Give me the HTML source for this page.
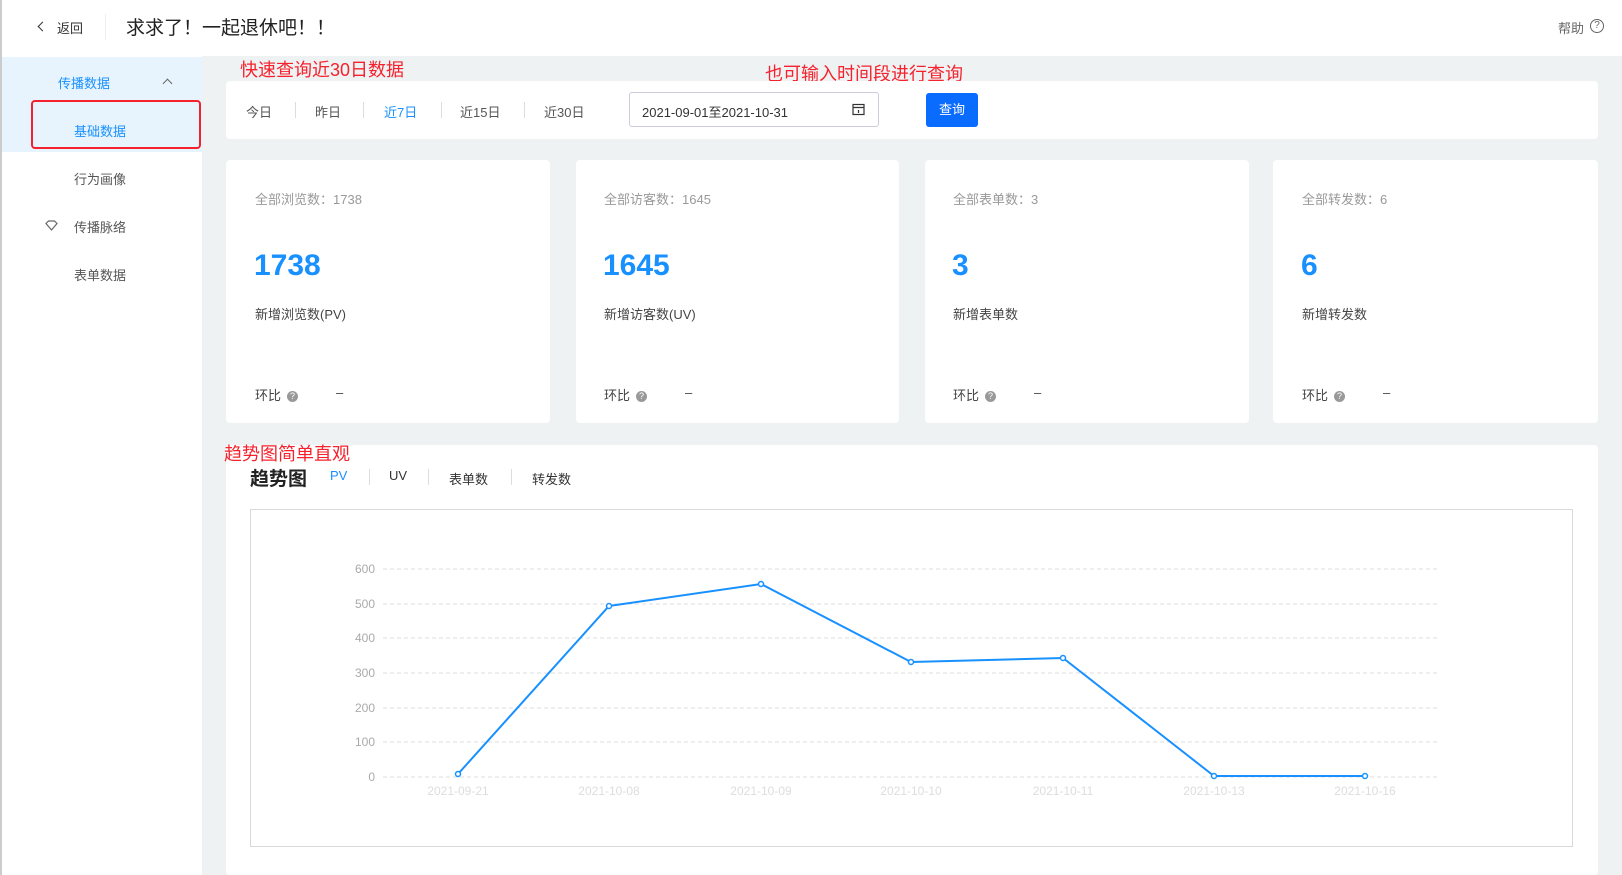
<!DOCTYPE html>
<html><head><meta charset="utf-8"><style>
*{margin:0;padding:0;box-sizing:border-box}
body{width:1622px;height:875px;overflow:hidden;background:#eef2f3;font-family:"Liberation Sans","Noto Sans CJK SC",sans-serif;position:relative;color:#333}
.a{position:absolute;white-space:nowrap}
.hdr{left:0;top:0;width:1622px;height:56px;background:#fff;border-left:2px solid #ccc}
.side{left:0;top:56px;width:202px;height:819px;background:#fff;border-left:2px solid #ccc}
.card{background:#fff;border-radius:4px}
.red{color:#f5222d;font-size:18px}
.sm{font-size:13px;color:#555}
.div{width:1px;height:16px;background:#ddd}
.lbl{font-size:13px;color:#999}
.big{font-size:30px;color:#1890ff;font-weight:bold}
.sub{font-size:13px;color:#444}
.q{display:inline-block;width:11px;height:11px;border-radius:50%;background:#999;color:#fff;font-size:9px;text-align:center;line-height:11px;vertical-align:1px;margin-left:6px}
</style></head><body>
<div class="a hdr"></div>
<div class="a" style="left:39px;top:23px;width:7px;height:7px;border-left:1.5px solid #333;border-bottom:1.5px solid #333;transform:rotate(45deg)"></div>
<div class="a sm" style="left:57px;top:18px;color:#333">返回</div>
<div class="a" style="left:105px;top:14px;width:1px;height:26px;background:#eee"></div>
<div class="a" style="left:126px;top:13px;font-size:19px;color:#222">求求了！一起退休吧！！</div>
<div class="a sm" style="left:1558px;top:18px;color:#666">帮助</div>
<div class="a" style="left:1590px;top:19px;width:14px;height:14px;border:1px solid #666;border-radius:50%;font-size:10px;text-align:center;line-height:12px;color:#666">?</div>

<div class="a side"></div>
<div class="a" style="left:2px;top:57px;width:200px;height:95px;background:#e8f4fd"></div>
<div class="a sm" style="left:58px;top:73px;color:#1890ff">传播数据</div>
<div class="a" style="left:164px;top:80px;width:7px;height:7px;border-left:1.5px solid #666;border-top:1.5px solid #666;transform:rotate(45deg)"></div>
<div class="a" style="left:31px;top:100px;width:170px;height:49px;border:2px solid #f5222d;border-radius:4px"></div>
<div class="a sm" style="left:74px;top:121px;color:#1890ff">基础数据</div>
<div class="a sm" style="left:74px;top:169px">行为画像</div>
<svg class="a" style="left:45px;top:220px" width="13" height="11" viewBox="0 0 13 11"><path d="M1 3.5L3.5 1h6L12 3.5 6.5 10z" fill="none" stroke="#666" stroke-width="1.2"/></svg>
<div class="a sm" style="left:74px;top:217px">传播脉络</div>
<div class="a sm" style="left:74px;top:265px">表单数据</div>

<div class="a red" style="left:240px;top:56px">快速查询近30日数据</div>
<div class="a red" style="left:765px;top:60px">也可输入时间段进行查询</div>
<div class="a card" style="left:226px;top:81px;width:1372px;height:58px"></div>
<div class="a sm" style="left:246px;top:102px">今日</div>
<div class="a div" style="left:295px;top:102px"></div>
<div class="a sm" style="left:315px;top:102px">昨日</div>
<div class="a div" style="left:363px;top:102px"></div>
<div class="a sm" style="left:384px;top:102px;color:#1890ff">近7日</div>
<div class="a div" style="left:441px;top:102px"></div>
<div class="a sm" style="left:460px;top:102px">近15日</div>
<div class="a div" style="left:524px;top:102px"></div>
<div class="a sm" style="left:544px;top:102px">近30日</div>
<div class="a" style="left:629px;top:92px;width:250px;height:35px;border:1px solid #ccd;border-radius:3px"></div>
<div class="a sm" style="left:642px;top:102px;color:#333">2021-09-01至2021-10-31</div>
<svg class="a" style="left:852px;top:103px" width="13" height="13" viewBox="0 0 13 13"><rect x="1" y="1.5" width="11" height="10" fill="none" stroke="#333" stroke-width="1.2"/><path d="M1 4.5h11M6.5 7v3" stroke="#333" stroke-width="1.2"/></svg>
<div class="a" style="left:926px;top:93px;width:52px;height:34px;background:#0a6cff;border-radius:3px;color:#fff;font-size:13px;text-align:center;line-height:34px">查询</div>

<div class="a card" style="left:226px;top:160px;width:324px;height:263px"></div>
<div class="a card" style="left:576px;top:160px;width:323px;height:263px"></div>
<div class="a card" style="left:925px;top:160px;width:324px;height:263px"></div>
<div class="a card" style="left:1273px;top:160px;width:325px;height:263px"></div>

<div class="a lbl" style="left:255px;top:189px">全部浏览数：1738</div>
<div class="a big" style="left:254px;top:249px">1738</div>
<div class="a sub" style="left:255px;top:304px">新增浏览数(PV)</div>
<div class="a sub" style="left:255px;top:385px">环比<span class="q">?</span></div><div class="a sub" style="left:336px;top:385px">–</div>

<div class="a lbl" style="left:604px;top:189px">全部访客数：1645</div>
<div class="a big" style="left:603px;top:249px">1645</div>
<div class="a sub" style="left:604px;top:304px">新增访客数(UV)</div>
<div class="a sub" style="left:604px;top:385px">环比<span class="q">?</span></div><div class="a sub" style="left:685px;top:385px">–</div>

<div class="a lbl" style="left:953px;top:189px">全部表单数：3</div>
<div class="a big" style="left:952px;top:249px">3</div>
<div class="a sub" style="left:953px;top:304px">新增表单数</div>
<div class="a sub" style="left:953px;top:385px">环比<span class="q">?</span></div><div class="a sub" style="left:1034px;top:385px">–</div>

<div class="a lbl" style="left:1302px;top:189px">全部转发数：6</div>
<div class="a big" style="left:1301px;top:249px">6</div>
<div class="a sub" style="left:1302px;top:304px">新增转发数</div>
<div class="a sub" style="left:1302px;top:385px">环比<span class="q">?</span></div><div class="a sub" style="left:1383px;top:385px">–</div>

<div class="a card" style="left:226px;top:445px;width:1372px;height:430px"></div>
<div class="a red" style="left:224px;top:440px">趋势图简单直观</div>
<div class="a" style="left:250px;top:464px;font-size:19px;font-weight:bold;color:#222">趋势图</div>
<div class="a sm" style="left:330px;top:468px;color:#1890ff">PV</div>
<div class="a div" style="left:369px;top:469px"></div>
<div class="a sm" style="left:389px;top:468px;color:#333">UV</div>
<div class="a div" style="left:428px;top:469px"></div>
<div class="a sm" style="left:449px;top:469px;color:#333">表单数</div>
<div class="a div" style="left:511px;top:469px"></div>
<div class="a sm" style="left:532px;top:469px;color:#333">转发数</div>
<div class="a" style="left:250px;top:509px;width:1323px;height:338px;border:1px solid #d9d9d9"></div>
<svg class="a" style="left:0;top:0" width="1622" height="875">
<g stroke="#ddd" stroke-dasharray="4 3" stroke-width="1">
<line x1="383" y1="569" x2="1440" y2="569"/><line x1="383" y1="604" x2="1440" y2="604"/><line x1="383" y1="638" x2="1440" y2="638"/><line x1="383" y1="673" x2="1440" y2="673"/><line x1="383" y1="708" x2="1440" y2="708"/><line x1="383" y1="742" x2="1440" y2="742"/><line x1="383" y1="777" x2="1440" y2="777"/>
</g>
<g font-family="Liberation Sans" font-size="12" fill="#aaa" text-anchor="end">
<text x="375" y="573">600</text><text x="375" y="608">500</text><text x="375" y="642">400</text><text x="375" y="677">300</text><text x="375" y="712">200</text><text x="375" y="746">100</text><text x="375" y="781">0</text>
</g>
<g font-family="Liberation Sans" font-size="12" fill="#ddd" text-anchor="middle">
<text x="458" y="795">2021-09-21</text><text x="609" y="795">2021-10-08</text><text x="761" y="795">2021-10-09</text><text x="911" y="795">2021-10-10</text><text x="1063" y="795">2021-10-11</text><text x="1214" y="795">2021-10-13</text><text x="1365" y="795">2021-10-16</text>
</g>
<polyline points="458,774 609,606 761,584 911,662 1063,658 1214,776 1365,776" fill="none" stroke="#1890ff" stroke-width="2"/>
<g fill="#fff" stroke="#1890ff" stroke-width="1.5">
<circle cx="458" cy="774" r="2.5"/><circle cx="609" cy="606" r="2.5"/><circle cx="761" cy="584" r="2.5"/><circle cx="911" cy="662" r="2.5"/><circle cx="1063" cy="658" r="2.5"/><circle cx="1214" cy="776" r="2.5"/><circle cx="1365" cy="776" r="2.5"/>
</g>
</svg>
</body></html>
